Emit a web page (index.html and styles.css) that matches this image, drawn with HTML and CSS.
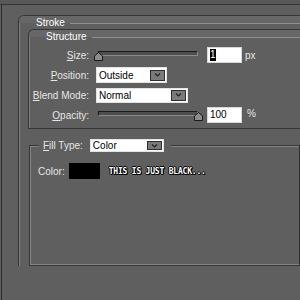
FILE: index.html
```html
<!DOCTYPE html>
<html lang="en">
<head>
    <meta charset="UTF-8">
    <title>Layer Style - Stroke</title>
    <link rel="stylesheet" href="styles.css">
</head>
<body>
    <div class="topbar"></div>
    <div class="window">
        <section class="group">
            <div class="head"><span class="title">Stroke</span><span class="rule"></span></div>
            <div class="group-body">
                <section class="group structure">
                    <div class="head"><span class="title">Structure</span><span class="rule"></span></div>
                    <div class="fields">
                        <label class="lbl"><u>S</u>ize:</label>
                        <div class="ctl">
                            <div class="slider">
                                <div class="track"></div>
                                <svg class="thumb" width="9" height="9" viewBox="0 0 9 9"><path d="M4.5 0.5 L8.5 4 V8.5 H0.5 V4 Z" fill="#8c8c8c" stroke="#1a1a1a"/></svg>
                            </div>
                            <div class="field"><span class="sel">1</span></div>
                            <span class="unit">px</span>
                        </div>

                        <label class="lbl"><u>P</u>osition:</label>
                        <div class="ctl">
                            <div class="select select-pos">
                                <span>Outside</span>
                                <span class="drop"><svg width="7" height="4" viewBox="0 0 7 4"><path d="M1 0.5 L3.5 3 L6 0.5" fill="none" stroke="#222" stroke-width="1.2"/></svg></span>
                            </div>
                        </div>

                        <label class="lbl"><u>B</u>lend Mode:</label>
                        <div class="ctl">
                            <div class="select select-blend">
                                <span>Normal</span>
                                <span class="drop"><svg width="7" height="4" viewBox="0 0 7 4"><path d="M1 0.5 L3.5 3 L6 0.5" fill="none" stroke="#222" stroke-width="1.2"/></svg></span>
                            </div>
                        </div>

                        <label class="lbl"><u>O</u>pacity:</label>
                        <div class="ctl">
                            <div class="slider">
                                <div class="track"></div>
                                <svg class="thumb thumb-end" width="9" height="9" viewBox="0 0 9 9"><path d="M4.5 0.5 L8.5 4 V8.5 H0.5 V4 Z" fill="#8c8c8c" stroke="#1a1a1a"/></svg>
                            </div>
                            <div class="field">100</div>
                            <span class="unit pct">%</span>
                        </div>
                    </div>
                </section>

                <fieldset class="fill">
                    <legend>
                        <span class="lbl-fill"><u>F</u>ill Type:</span>
                        <span class="select select-fill">
                            <span>Color</span>
                            <span class="drop"><svg width="7" height="4" viewBox="0 0 7 4"><path d="M1 0.5 L3.5 3 L6 0.5" fill="none" stroke="#222" stroke-width="1.2"/></svg></span>
                        </span>
                    </legend>
                    <div class="color-row">
                        <span>Color:</span>
                        <span class="swatch"></span>
                        <span class="note">THIS IS JUST BLACK...</span>
                    </div>
                </fieldset>
            </div>
        </section>
    </div>
</body>
</html>
```

FILE: styles.css
```css
* {
    margin: 0;
    padding: 0;
    box-sizing: border-box;
}

body {
    width: 300px;
    height: 300px;
    overflow: hidden;
    background: #5f5f5f;
    font-family: "Liberation Sans", Arial, sans-serif;
    font-size: 10px;
    color: #e6e6e6;
}

.topbar {
    height: 5px;
    background: #585858;
    border-bottom: 1px solid #353535;
}

.window {
    height: 295px;
    margin-left: 1px;
    border-left: 1px solid #2c2c2c;
    padding: 10px 0 0 16px;
}

/* rounded group frames */
.group {
    border-top: 1px solid #363636;
    border-left: 1px solid #363636;
    border-top-left-radius: 6px;
    box-shadow: inset 1px 0 0 #7e7e7e;
}

.head {
    display: flex;
    height: 13px;
    border-top-left-radius: 5px;
    background: linear-gradient(#676767, #676767) top left / 100% 7px no-repeat;
}

.title {
    padding: 1px 5px 0 17px;
    line-height: 12px;
    color: #fff;
}

.rule {
    flex: 1;
    height: 1px;
    margin-top: 7px;
    background: #8e8e8e;
}

.group-body {
    padding-left: 9px;
}

.structure {
    border-bottom: 1px solid #363636;
}

.fields {
    display: grid;
    grid-template-columns: 60px auto;
    grid-auto-rows: 16px;
    column-gap: 7px;
    row-gap: 4px;
    align-items: center;
    padding: 4px 0 5px 0;
}

.lbl {
    text-align: right;
    white-space: nowrap;
}

.ctl {
    display: flex;
    align-items: center;
}

/* slider */
.slider {
    position: relative;
    width: 100px;
    height: 16px;
    margin-left: 2px;
    padding-top: 4px;
}

.track {
    height: 5px;
    background: #4e4e4e;
    border: 1px solid #1c1c1c;
    border-right-color: #8a8a8a;
    border-bottom-color: #8a8a8a;
}

.thumb {
    position: absolute;
    top: 5px;
    left: -4px;
}

.thumb-end {
    left: 96px;
}

.field {
    width: 35px;
    height: 16px;
    margin-left: 9px;
    padding-left: 2px;
    background: #fff;
    border: 1px solid #d8d8d8;
    color: #000;
    line-height: 14px;
}

.sel {
    display: inline-block;
    height: 12px;
    line-height: 12px;
    background: #000;
    color: #fff;
}

.unit {
    margin-left: 3px;
}

.pct {
    margin-left: 5px;
    margin-top: -4px;
}

/* dropdowns */
.select {
    display: flex;
    align-items: center;
    justify-content: space-between;
    height: 16px;
    padding: 0 1px 0 2px;
    background: #fff;
    border: 1px solid #e4e4e4;
    color: #000;
}

.select-pos {
    width: 71px;
}

.select-blend {
    width: 92px;
    height: 15px;
}

.select-fill {
    width: 74px;
    height: 13px;
}

.drop {
    display: flex;
    align-items: center;
    justify-content: center;
    width: 15px;
    height: 11px;
    background: #7b7b7b;
    border: 1px solid #2e2e2e;
}

.select-fill .drop {
    height: 9px;
}

/* fill type frame */
.fill {
    width: 271px;
    margin: 10px 0 0 1px;
    padding: 0 0 86px 8px;
    border: 1px solid #363636;
    border-right-color: #2c2c2c;
    box-shadow: inset 1px 1px 0 #858585, inset 0 -1px 0 #858585;
}

.fill legend {
    display: flex;
    align-items: center;
    height: 13px;
    margin-left: 1px;
    padding: 0 7px 0 4px;
    background: #5f5f5f;
}

.lbl-fill {
    margin-right: 7px;
}

.color-row {
    display: flex;
    align-items: center;
    height: 16px;
    margin-top: 11px;
}

.swatch {
    width: 31px;
    height: 16px;
    margin-left: 4px;
    background: #000;
}

.note {
    margin-left: 9px;
    font: bold 8px "DejaVu Sans Mono", monospace;
    letter-spacing: -0.2px;
    color: #fff;
    text-shadow: 1px 1px 0 #000, -1px 0 0 #000, 0 -1px 0 #000, 1px 0 0 #000, 0 1px 0 #000;
}
```
